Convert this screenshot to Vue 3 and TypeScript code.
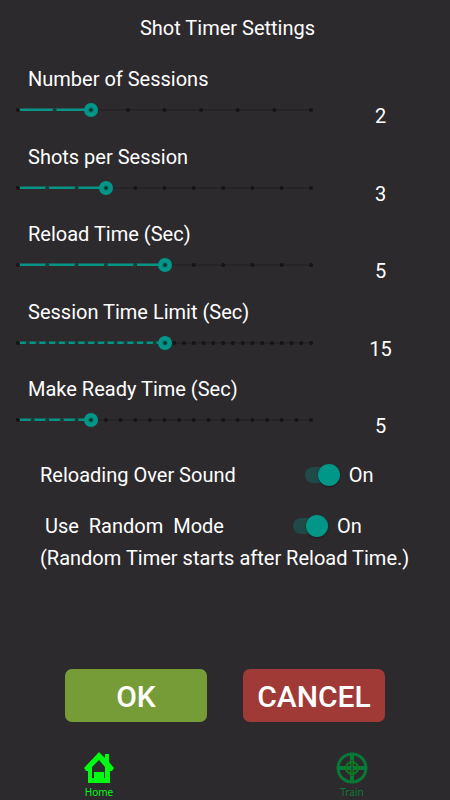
<script setup lang="ts">
import { ref } from 'vue'

interface SliderSetting {
  id: string
  label: string
  max: number
  value: number
}

const settings = ref<SliderSetting[]>([
  { id: 'sessions', label: 'Number of Sessions', max: 8, value: 2 },
  { id: 'shots', label: 'Shots per Session', max: 10, value: 3 },
  { id: 'reload', label: 'Reload Time (Sec)', max: 10, value: 5 },
  { id: 'limit', label: 'Session Time Limit (Sec)', max: 30, value: 15 },
  { id: 'ready', label: 'Make Ready Time (Sec)', max: 20, value: 5 },
])

const reloadSound = ref(true)
const randomMode = ref(true)

const percent = (step: number, max: number): string => `${(step / max) * 100}%`
</script>

<template>
  <div class="screen">
    <h1 class="title">Shot Timer Settings</h1>

    <main class="content">
      <section class="sliders">
        <div v-for="s in settings" :key="s.id" class="setting">
          <label class="setting-label" :for="s.id">{{ s.label }}</label>
          <div class="setting-body">
            <div class="slider">
              <svg class="scale" height="14" aria-hidden="true">
                <rect class="track" x="0" y="6" width="100%" height="2" />
                <rect class="fill" x="0" y="6" :width="percent(s.value, s.max)" height="2" />
                <rect class="fill-edge" x="0" y="5" :width="percent(s.value, s.max)" height="1" />
                <template v-for="n in s.max + 1" :key="n">
                  <circle
                    :class="n > 1 && n - 1 < s.value ? 'tick-on' : 'tick'"
                    :cx="percent(n - 1, s.max)"
                    cy="7"
                    r="2"
                  />
                </template>
              </svg>
              <input :id="s.id" v-model.number="s.value" class="range" type="range" min="0" :max="s.max" />
            </div>
            <output class="value" :for="s.id">{{ s.value }}</output>
          </div>
        </div>
      </section>

      <section class="toggles">
        <div class="toggle">
          <label for="reload-sound">Reloading Over Sound</label>
          <span class="toggle-control">
            <input id="reload-sound" v-model="reloadSound" class="switch" type="checkbox" role="switch" />
            <span>{{ reloadSound ? 'On' : 'Off' }}</span>
          </span>
        </div>
        <div class="toggle">
          <label for="random-mode">&nbsp;Use&nbsp; Random&nbsp; Mode</label>
          <span class="toggle-control">
            <input id="random-mode" v-model="randomMode" class="switch" type="checkbox" role="switch" />
            <span>{{ randomMode ? 'On' : 'Off' }}</span>
          </span>
        </div>
        <p class="note">(Random Timer starts after Reload Time.)</p>
      </section>
    </main>

    <div class="actions">
      <button class="action ok" type="button">OK</button>
      <button class="action cancel" type="button">CANCEL</button>
    </div>

    <nav class="tabs">
      <a class="tab home" href="#home">
        <svg width="32" height="34" viewBox="0 0 32 34" aria-hidden="true">
          <path
            fill="currentColor"
            fill-rule="evenodd"
            d="M16 1 L22 7 V3 H26 V11 L31 17 L29 20 H27 V32 H5 V20 H3 L1 17 Z M16 9 L9 16 V27 H11 V21 H21 V27 H22 V16 Z"
          />
        </svg>
        <span>Home</span>
      </a>
      <a class="tab train" href="#train">
        <svg width="32" height="34" viewBox="0 0 32 34" aria-hidden="true">
          <g fill="none" stroke="currentColor">
            <circle cx="16" cy="17" r="14" stroke-width="3" />
            <path d="M16 3 V31 M2 17 H30" stroke-width="4" />
            <path class="gap" d="M16 9 V25" stroke-width="1" />
            <circle class="ring" cx="16" cy="17" r="6" stroke-width="2" />
          </g>
        </svg>
        <span>Train</span>
      </a>
    </nav>
  </div>
</template>

<style>
body {
  margin: 0;
  background: #2d2a2d;
}
</style>

<style scoped>
.screen {
  display: flex;
  flex-direction: column;
  box-sizing: border-box;
  min-height: 100vh;
  padding-top: 16px;
  background: #2d2a2d;
  color: #fff;
  font-family: Roboto, sans-serif;
  font-size: 20px;
  line-height: 24px;
}

.title {
  margin: 0;
  padding-left: 5px;
  font-size: 20px;
  font-weight: 400;
  text-align: center;
}

.content {
  flex: 1;
}

.sliders {
  display: grid;
  grid-auto-rows: 1fr;
  min-height: 388px;
  padding-top: 27px;
}

.setting {
  display: flex;
  flex-direction: column;
  gap: 12px;
  padding: 0 7px 0 11px;
}

.setting-label {
  padding-left: 17px;
}

.setting-body {
  display: flex;
  align-items: flex-start;
}

.slider {
  display: grid;
  flex: 1;
  min-width: 0;
}

.scale,
.range {
  grid-area: 1 / 1;
}

.scale {
  box-sizing: border-box;
  width: calc(100% - 14px);
  margin: 0 7px;
  overflow: visible;
}

.track {
  fill: #262427;
}

.fill {
  fill: #059485;
}

.fill-edge {
  fill: #1b5f58;
}

.tick {
  fill: #151415;
}

.tick-on {
  fill: #1c3a37;
}

.range {
  appearance: none;
  width: 100%;
  height: 14px;
  margin: 0;
  background: transparent;
  cursor: pointer;
}

.range::-webkit-slider-thumb {
  appearance: none;
  width: 14px;
  height: 14px;
  border-radius: 50%;
  background: radial-gradient(circle, #0b3532 0 1px, #009688 3px);
}

.value {
  width: 125px;
  line-height: 26px;
  text-align: center;
}

.toggles {
  padding: 8px 40px 0;
}

.toggle {
  display: flex;
  align-items: center;
  gap: 69px;
  margin-bottom: 27px;
}

.toggle + .toggle {
  margin-bottom: 8px;
}

.toggle-control {
  display: flex;
  align-items: center;
  gap: 9px;
}

.switch {
  display: flex;
  align-items: center;
  justify-content: flex-start;
  appearance: none;
  width: 35px;
  height: 16px;
  margin: 0;
  border-radius: 8px;
  background: #4a484a;
  cursor: pointer;
}

.switch:checked {
  justify-content: flex-end;
  background: #204a47;
}

.switch::before {
  content: '';
  width: 22px;
  height: 22px;
  border-radius: 50%;
  background: #b9b9b9;
  box-shadow: 0 1px 2px rgba(0, 0, 0, 0.4);
}

.switch:checked::before {
  background: #009688;
}

.note {
  margin: 0;
}

.actions {
  display: flex;
  justify-content: center;
  gap: 36px;
  padding-bottom: 29px;
}

.action {
  width: 142px;
  height: 53px;
  padding: 2px 0 0;
  border: 0;
  border-radius: 7px;
  color: #fff;
  font-family: inherit;
  font-size: 30px;
  font-weight: 500;
  cursor: pointer;
}

.ok {
  background: #769c38;
}

.cancel {
  background: #9f3a37;
}

.tabs {
  display: flex;
  justify-content: space-between;
  padding: 0 82px 1px 83px;
}

.tab {
  display: flex;
  flex-direction: column;
  align-items: center;
  width: 32px;
  font-family: 'Noto Sans', sans-serif;
  font-size: 10px;
  line-height: 14px;
  text-decoration: none;
}

.home {
  color: #00fa12;
}

.train {
  color: #087a38;
}

.gap {
  stroke: #2d2a2d;
}

.ring {
  stroke: #0b7a18;
}
</style>
